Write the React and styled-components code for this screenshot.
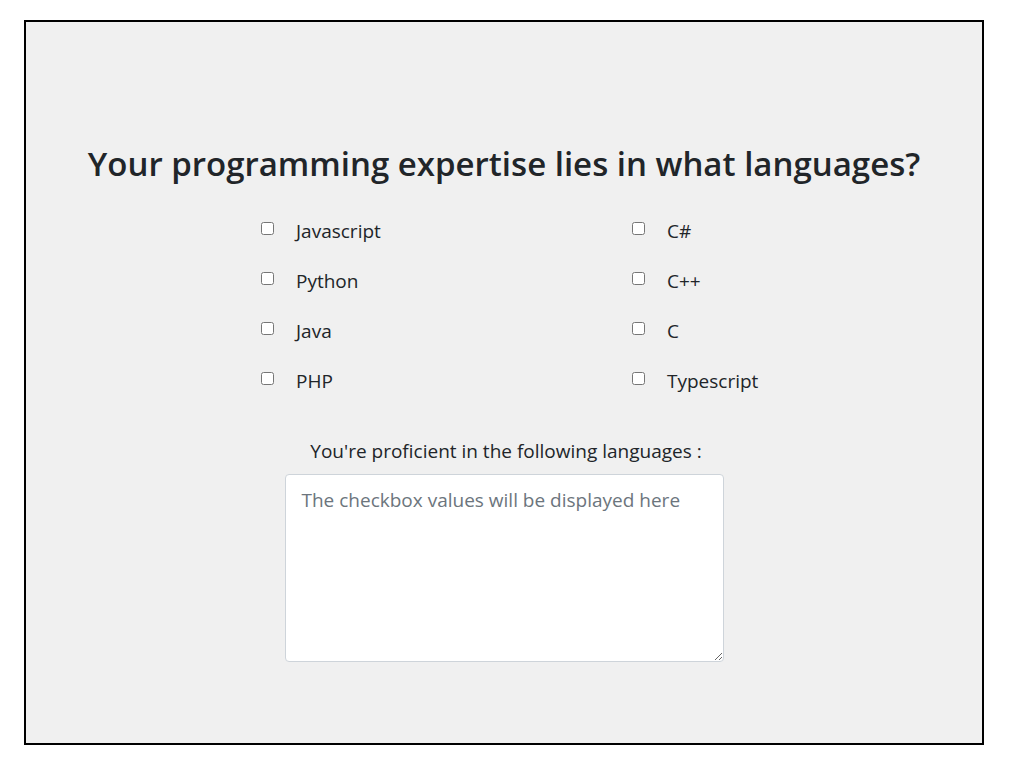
import React from "react";
import styled, { createGlobalStyle } from "styled-components";

const Global = createGlobalStyle`
  html, body { margin: 0; padding: 0; background: #fff; }
  body { font-family: "Open Sans", "Noto Sans", sans-serif; color: #212529; }
  * { box-sizing: border-box; }
`;

const Page = styled.div`
  padding: 20px 30px 16px 24px;
`;

const Panel = styled.div`
  border: 2px solid #000;
  background: #f0f0f0;
  height: 725px;
  width: 960px;
  padding-top: 122px;
  display: flex;
  flex-direction: column;
  align-items: center;
`;

const Title = styled.h2`
  margin: 0;
  font-size: 33px;
  font-weight: 600;
  line-height: 1.2;
  text-align: center;
`;

const Grid = styled.div`
  align-self: flex-start;
  margin-left: 235px;
  margin-top: 35px;
  display: grid;
  grid-template-columns: 371px 371px;
  row-gap: 26px;
`;

const Option = styled.label`
  display: flex;
  align-items: center;
  height: 24px;
  font-size: 19px;
`;

const Box = styled.input`
  width: 13px;
  height: 13px;
  margin: 0 22px 4px 0;
`;

const Caption = styled.div`
  margin-top: 44px;
  font-size: 19px;
  line-height: 1.5;
  text-align: center;
  margin-left: 4px;
`;

const Area = styled.textarea`
  margin-top: 9px;
  width: 439px;
  height: 188px;
  flex-shrink: 0;
  border: 1px solid #ced4da;
  border-radius: 4px;
  background: #fff;
  padding: 12px 16px;
  font-family: inherit;
  font-size: 19px;
  color: #212529;
  &::placeholder { color: #6c757d; }
`;

const left = ["Javascript", "Python", "Java", "PHP"];
const right = ["C#", "C++", "C", "Typescript"];

export default function App() {
  const items = [];
  for (let i = 0; i < 4; i++) {
    items.push(left[i], right[i]);
  }
  return (
    <Page>
      <Global />
      <Panel>
        <Title>Your programming expertise lies in what languages?</Title>
        <Grid>
          {items.map((name) => (
            <Option key={name}>
              <Box type="checkbox" />
              {name}
            </Option>
          ))}
        </Grid>
        <Caption>You're proficient in the following languages :</Caption>
        <Area placeholder="The checkbox values will be displayed here" />
      </Panel>
    </Page>
  );
}
